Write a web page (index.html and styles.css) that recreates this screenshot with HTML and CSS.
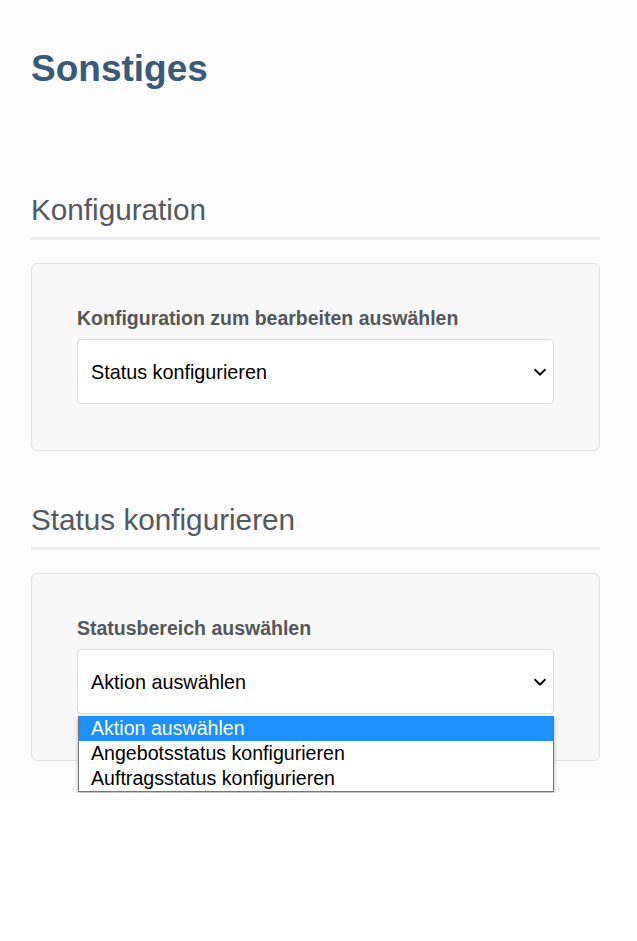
FILE: index.html
```html
<!DOCTYPE html>
<html lang="de">
<head>
    <meta charset="UTF-8">
    <meta name="viewport" content="width=device-width, initial-scale=1.0">
    <title>Sonstiges</title>
    <link rel="stylesheet" href="styles.css">
</head>
<body>
    <div class="page">
        <h1>Sonstiges</h1>

        <h2 class="section-title">Konfiguration</h2>
        <div class="card">
            <label class="field-label">Konfiguration zum bearbeiten auswählen</label>
            <div class="select-box">
                <span>Status konfigurieren</span>
                <svg class="chevron" width="14" height="8" viewBox="0 0 14 8">
                    <path d="M1.5 1.2 L7 6.5 L12.5 1.2" fill="none" stroke="#111" stroke-width="2"/>
                </svg>
            </div>
        </div>

        <h2 class="section-title second">Status konfigurieren</h2>
        <div class="card">
            <label class="field-label">Statusbereich auswählen</label>
            <div class="select-wrap">
                <div class="select-box">
                    <span>Aktion auswählen</span>
                    <svg class="chevron" width="14" height="8" viewBox="0 0 14 8">
                        <path d="M1.5 1.2 L7 6.5 L12.5 1.2" fill="none" stroke="#111" stroke-width="2"/>
                    </svg>
                </div>
                <ul class="dropdown">
                    <li class="selected">Aktion auswählen</li>
                    <li>Angebotsstatus konfigurieren</li>
                    <li>Auftragsstatus konfigurieren</li>
                </ul>
            </div>
        </div>
    </div>
</body>
</html>
```

FILE: styles.css
```css
body {
    margin: 0;
    background-color: #fff;
    font-family: "Liberation Sans", Arial, sans-serif;
}
.page {
    background-color: #fcfcfc;
    padding: 47px 37px 32px 31px;
    box-shadow: 0 1px 3px rgba(0, 0, 0, 0.08);
}
h1 {
    margin: 0;
    font-size: 37px;
    line-height: 44px;
    font-weight: bold;
    color: #3b5a77;
}
.section-title {
    margin: 101px 0 0 0;
    padding-bottom: 9px;
    font-size: 29.7px;
    line-height: 36px;
    font-weight: normal;
    color: #535960;
    border-bottom: 3px solid #eceef0;
}
.section-title.second {
    margin-top: 51px;
}
.card {
    margin-top: 23px;
    padding: 42px 45px 46px 45px;
    background-color: #f8f8f8;
    border: 1px solid #e2e2e2;
    border-radius: 6px;
}
.field-label {
    display: block;
    margin-bottom: 9px;
    font-size: 19.5px;
    line-height: 24px;
    font-weight: bold;
    color: #54575a;
}
.select-wrap {
    position: relative;
}
.select-box {
    display: flex;
    align-items: center;
    justify-content: space-between;
    height: 63px;
    padding: 0 6px 0 13px;
    background-color: #fff;
    border: 1px solid #dadada;
    border-radius: 4px;
    font-size: 19.8px;
    line-height: 24px;
    color: #000;
}
.chevron {
    display: block;
}
.dropdown {
    position: absolute;
    top: 67px;
    left: 1px;
    right: 0;
    margin: 0;
    padding: 0;
    list-style: none;
    background-color: #fff;
    border: 1px solid #767676;
    border-top: 0;
    box-shadow: 0 2px 4px rgba(0, 0, 0, 0.3);
    z-index: 2;
}
.dropdown li {
    height: 25px;
    padding-left: 12px;
    font-size: 19.6px;
    line-height: 25px;
    color: #000;
}
.dropdown li.selected {
    background-color: #1e90ff;
    color: #fff;
}
```
